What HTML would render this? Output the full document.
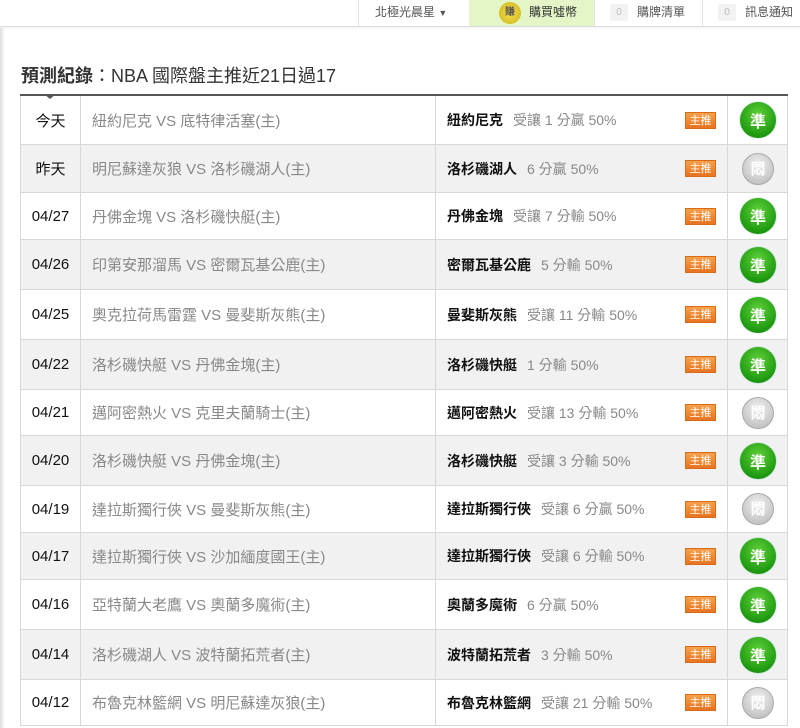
<!DOCTYPE html>
<html><head><meta charset="utf-8"><style>
*{margin:0;padding:0;box-sizing:border-box}
body{width:800px;height:727px;overflow:hidden;background:#fff;font-family:"Liberation Sans","Noto Sans CJK TC",sans-serif;position:relative}
.nav{position:absolute;left:0;top:0;width:800px;height:27px;border-bottom:1px solid #ddd;box-shadow:0 1px 2px #eee;font-size:12px;color:#555}
.nav div{position:absolute;top:0;height:26px;line-height:25px}
.sep{width:1px;background:#e3e3e3}
.cnt{display:inline-block;width:18px;height:17px;line-height:17px;background:#f2f2f2;color:#bbb;font-size:10px;text-align:center;vertical-align:middle;margin-right:9px;border-radius:2px}
.lstrip{position:absolute;left:0;top:28px;width:5px;height:700px;background:linear-gradient(to right,#ddd,#fff)}
h1{position:absolute;left:21px;top:62px;font-size:18px;font-weight:normal;color:#333;letter-spacing:0}
h1 b{font-weight:bold}
.tbl{position:absolute;left:20px;top:94px;width:768px;border-top:2px solid #555}
.arrow{position:absolute;left:44px;top:94px;width:0;height:0;border-left:6px solid transparent;border-right:6px solid transparent;border-top:5px solid #555}
.row{position:relative;border-bottom:1px solid #d8d8d8;border-left:1px solid #d8d8d8;border-right:1px solid #d8d8d8}
.row.g{background:#f1f1f1}
.row>div{position:absolute;top:0;height:100%;display:flex;align-items:center}
.d{left:0;width:60px;justify-content:center;font-size:15px;color:#111;border-right:1px solid #d8d8d8}
.m{left:60px;width:355px;padding-left:11px;font-size:15px;color:#888;border-right:1px solid #d8d8d8}
.p{left:415px;width:292px;padding-left:11px;font-size:14px;color:#111;font-weight:bold;border-right:1px solid #d8d8d8}
.p span{color:#888;margin-left:10px;font-weight:normal}
.p i{position:absolute;left:249px;font-style:normal;font-weight:normal;background:linear-gradient(#f7a04a,#e8731f);color:#fff;font-size:11px;width:31px;height:17px;line-height:17px;text-align:center;border:1px solid #d96a1a}
.r{left:707px;width:60px;justify-content:center}
.ok{width:36px;height:36px;border-radius:50%;background:radial-gradient(circle at 50% 35%,#5fd03a,#1f9a10 70%,#147a08);color:#fff;font-weight:bold;font-size:16px;text-align:center;line-height:36px;box-shadow:0 0 1px #0a5;font-family:"Noto Sans CJK TC",sans-serif}
.no{width:32px;height:32px;border-radius:50%;background:radial-gradient(circle at 50% 35%,#f0f0f0,#c4c4c4 75%,#aaa);border:1px solid #aaa;color:#fff;font-weight:bold;font-size:15px;text-align:center;line-height:30px;font-family:"Noto Sans CJK TC",sans-serif}
</style></head><body>
<div class="nav">
<div class="sep" style="left:358px"></div>
<div style="left:375px">北極光晨星 <span style="font-size:9px">▼</span></div>
<div style="left:469px;width:125px;background:#e4f6c8">
 <span style="position:absolute;left:30px;top:2px;width:22px;height:22px;border-radius:50%;background:radial-gradient(#f7e04a,#c9b21c);font-size:10px;color:#555;text-align:center;line-height:22px;font-weight:bold">賺</span>
 <span style="position:absolute;left:60px;color:#333">購買噓幣</span></div>
<div class="sep" style="left:594px"></div>
<div style="left:610px"><span class="cnt">0</span>購牌清單</div>
<div class="sep" style="left:702px"></div>
<div style="left:718px"><span class="cnt">0</span>訊息通知</div>
</div>
<div class="lstrip"></div>
<h1><b>預測紀錄</b>：NBA 國際盤主推近21日過17</h1>
<div class="tbl">
<div class="row" style="height:49px"><div class="d">今天</div><div class="m">紐約尼克 VS 底特律活塞(主)</div><div class="p">紐約尼克<span>受讓 1 分贏 50%</span><i>主推</i></div><div class="r"><div class="ok">準</div></div></div>
<div class="row g" style="height:48px"><div class="d">昨天</div><div class="m">明尼蘇達灰狼 VS 洛杉磯湖人(主)</div><div class="p">洛杉磯湖人<span>6 分贏 50%</span><i>主推</i></div><div class="r"><div class="no">悶</div></div></div>
<div class="row" style="height:47px"><div class="d">04/27</div><div class="m">丹佛金塊 VS 洛杉磯快艇(主)</div><div class="p">丹佛金塊<span>受讓 7 分輸 50%</span><i>主推</i></div><div class="r"><div class="ok">準</div></div></div>
<div class="row g" style="height:50px"><div class="d">04/26</div><div class="m">印第安那溜馬 VS 密爾瓦基公鹿(主)</div><div class="p">密爾瓦基公鹿<span>5 分輸 50%</span><i>主推</i></div><div class="r"><div class="ok">準</div></div></div>
<div class="row" style="height:50px"><div class="d">04/25</div><div class="m">奧克拉荷馬雷霆 VS 曼斐斯灰熊(主)</div><div class="p">曼斐斯灰熊<span>受讓 11 分輸 50%</span><i>主推</i></div><div class="r"><div class="ok">準</div></div></div>
<div class="row g" style="height:50px"><div class="d">04/22</div><div class="m">洛杉磯快艇 VS 丹佛金塊(主)</div><div class="p">洛杉磯快艇<span>1 分輸 50%</span><i>主推</i></div><div class="r"><div class="ok">準</div></div></div>
<div class="row" style="height:46px"><div class="d">04/21</div><div class="m">邁阿密熱火 VS 克里夫蘭騎士(主)</div><div class="p">邁阿密熱火<span>受讓 13 分輸 50%</span><i>主推</i></div><div class="r"><div class="no">悶</div></div></div>
<div class="row g" style="height:50px"><div class="d">04/20</div><div class="m">洛杉磯快艇 VS 丹佛金塊(主)</div><div class="p">洛杉磯快艇<span>受讓 3 分輸 50%</span><i>主推</i></div><div class="r"><div class="ok">準</div></div></div>
<div class="row" style="height:47px"><div class="d">04/19</div><div class="m">達拉斯獨行俠 VS 曼斐斯灰熊(主)</div><div class="p">達拉斯獨行俠<span>受讓 6 分贏 50%</span><i>主推</i></div><div class="r"><div class="no">悶</div></div></div>
<div class="row g" style="height:47px"><div class="d">04/17</div><div class="m">達拉斯獨行俠 VS 沙加緬度國王(主)</div><div class="p">達拉斯獨行俠<span>受讓 6 分輸 50%</span><i>主推</i></div><div class="r"><div class="ok">準</div></div></div>
<div class="row" style="height:50px"><div class="d">04/16</div><div class="m">亞特蘭大老鷹 VS 奧蘭多魔術(主)</div><div class="p">奧蘭多魔術<span>6 分贏 50%</span><i>主推</i></div><div class="r"><div class="ok">準</div></div></div>
<div class="row g" style="height:50px"><div class="d">04/14</div><div class="m">洛杉磯湖人 VS 波特蘭拓荒者(主)</div><div class="p">波特蘭拓荒者<span>3 分輸 50%</span><i>主推</i></div><div class="r"><div class="ok">準</div></div></div>
<div class="row" style="height:46px"><div class="d">04/12</div><div class="m">布魯克林籃網 VS 明尼蘇達灰狼(主)</div><div class="p">布魯克林籃網<span>受讓 21 分輸 50%</span><i>主推</i></div><div class="r"><div class="no">悶</div></div></div>
</div>
<div class="arrow"></div>
</body></html>
